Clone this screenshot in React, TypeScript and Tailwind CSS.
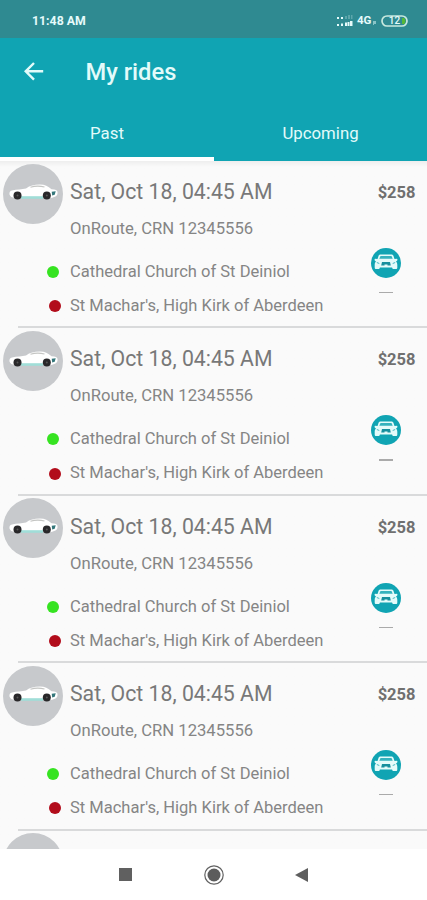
import React from 'react';

type Ride = { date: string; service: string; from: string; to: string; price: string };

const ride: Ride = {
  date: 'Sat, Oct 18, 04:45 AM',
  service: 'OnRoute, CRN 12345556',
  from: 'Cathedral Church of St Deiniol',
  to: "St Machar's, High Kirk of Aberdeen",
  price: '$258',
};

const rides: Ride[] = [ride, ride, ride, ride];

function StatusBar() {
  return (
    <div className="flex h-[38px] shrink-0 items-center justify-between bg-[#2f8a91] pl-8 pr-[19px] pt-[4px] text-[#e6fbfb]">
      <span className="text-[12.3px] font-bold leading-none">11:48 AM</span>
      <div className="flex items-center">
        <svg className="h-3 w-4" viewBox="0 0 16 12" fill="currentColor">
          <path d="M0 2h2v2H0zM4 2h2v2H4zM0 9h2v2H0zM4 8.5h2V11H4zM8 7.500h2V11H8zM10.500 7h2v4h-2zM13 6h2.500v5H13z" />
          <path opacity=".25" d="M8 1h2v3H8zM11 0h2v4h-2zM14 0h1.500v4H14z" />
        </svg>
        <span className="ml-1 w-[15px] text-[11.5px] font-bold leading-none">4G</span>
        <svg className="ml-px mr-1 mt-1 h-1 w-1" viewBox="0 0 4 4"><path fill="#8ac4c7" d="M0 0h3v3H1v1H0z" /></svg>
        <div className="relative -mt-px flex h-3 w-[27px] items-center justify-center">
          <svg className="absolute inset-0" width="27" height="12" viewBox="0 0 27 12">
            <path d="M21 3h2.500l1 3-1 3H21z" fill="#55b936" />
            <rect x="1" y="1" width="25" height="10" rx="5" fill="none" stroke="#c8e9df" strokeWidth="1.700" />
          </svg>
          <span className="relative pt-px text-[10px] font-medium leading-none">12</span>
        </div>
      </div>
    </div>
  );
}

function SideCar() {
  return (
    <svg className="h-[60px] w-[60px] shrink-0" viewBox="0 0 60 60">
      <circle cx="30" cy="30" r="30" fill="#c7c9cc" />
      <path d="M6.500 30.500c-.3-2.500.5-3.500 2.500-4 5-1.300 10-1 14-2 4-3 8-4 14-4 5 0 8 2 11.500 4.700 4 .4 6 1 6 2.800.3 2-.5 3.500-2 4.500l-4 1.500H12c-3-.3-5-1.500-5.500-3.500z" fill="#fff" />
      <path d="M18 32.200h22v2.600H18z" fill="#a0ded8" />
      <path d="M27.500 23.300c4-1.300 9-1.500 14-.3" fill="none" stroke="#c4c5c3" strokeWidth="1.200" />
      <circle cx="14.500" cy="31.500" r="4" fill="#29282a" />
      <circle cx="43.800" cy="31.500" r="4" fill="#29282a" />
      <circle cx="14.500" cy="31.500" r="1" fill="#555" />
      <circle cx="43.800" cy="31.500" r="1" fill="#555" />
      <path d="M48.700 27.700l4-.5-1 3.500-2.500.7z" fill="#34777b" />
    </svg>
  );
}

function FrontCar() {
  return (
    <svg className="h-[30px] w-[30px]" viewBox="0 0 30 30">
      <circle cx="15" cy="15" r="15" fill="#10a4b3" />
      <path d="M9.500 6.500h11c1 0 1.600.5 2 1.500l1 3 2.500-.3c.6.7.6 1.300 0 2l-1 .8c1 1 1.300 2 1.300 3.500v2.500c0 1-.5 1.500-1.500 1.500h-2c-1 0-1.500-.5-1.700-1.500H8.900c-.2 1-.7 1.500-1.700 1.500h-2c-1 0-1.500-.5-1.500-1.500V17c0-1.500.3-2.500 1.300-3.500l-1-.8c-.6-.7-.6-1.300 0-2l2.500.3 1-3c.4-1 1-1.500 2-1.500z" fill="#e4fbfa" />
      <path d="M9.500 8h11l1.200 2.800H8.300z" fill="#35b2bd" />
      <path d="M11 14h8l.8 3.500h-3.300v-1h-3v1h-3.300z" fill="#168f9d" />
      <path d="M5.800 14.500l2.500 1M24.200 14.500l-2.500 1" stroke="#48b8c2" />
    </svg>
  );
}

function RideRow({ item }: { item: Ride }) {
  return (
    <article className="flex h-[167.4px] shrink-0 flex-col">
      <div className="flex flex-1 pl-[2.5px] pr-[11.5px] pt-[2.5px] text-[#858585]">
        <div className="w-[67.5px] shrink-0">
          <SideCar />
          <div className="mt-[42.3px] flex flex-col">
            <i className="ml-[44.5px] block h-3 w-3 rounded-full bg-[#36e321]" />
            <i className="ml-[46.5px] mt-[22.5px] block h-3 w-3 rounded-full bg-[#b20c1b]" />
          </div>
        </div>
        <div className="flex flex-1 flex-col whitespace-nowrap">
          <h2 className="mt-[14.5px] text-[21.25px] leading-7 text-[#787878]">{item.date}</h2>
          <p className="mt-[12.8px] text-[16.65px] leading-5">{item.service}</p>
          <p className="mt-[23px] text-[16.55px] leading-5">{item.from}</p>
          <p className="mt-[14.2px] text-[16.52px] leading-5">{item.to}</p>
        </div>
        <div className="flex w-11 flex-col items-end">
          <span className="mt-[19.3px] text-[16.5px] font-bold leading-5 text-[#707070]">{item.price}</span>
          <div className="mr-[14.5px] mt-[45px] flex flex-col items-center">
            <FrontCar />
            <i className="mt-[14px] block h-[1.5px] w-[14px] bg-[#aaa]" />
          </div>
        </div>
      </div>
      <div className="ml-[18px] h-[2px] shrink-0 bg-[#d9dadb]" />
    </article>
  );
}

export default function App() {
  return (
    <main className="flex h-[900px] w-[427px] flex-col overflow-hidden bg-[#fafafa] font-['Roboto',sans-serif]">
      <StatusBar />
      <header className="flex h-[123px] shrink-0 flex-col bg-[#10a4b3] text-[#e3fbfa]">
        <div className="flex h-[67px] items-center pl-6">
          <svg className="h-5 w-5" viewBox="0 0 20 20" fill="none" stroke="currentColor" strokeWidth="2.4">
            <path d="M10 1L1.700 9.300l8.300 8.300M1.700 9.300h17.500" />
          </svg>
          <h1 className="ml-[41.5px] mt-px text-[23.7px] font-medium leading-7">My rides</h1>
        </div>
        <nav className="flex flex-1 text-[16.8px]">
          <div className="flex w-[214px] flex-col border-b-4 border-white pt-[16px] text-center leading-6">Past</div>
          <div className="flex-1 pt-[16px] text-center leading-6">Upcoming</div>
        </nav>
      </header>
      <section className="flex h-[688px] shrink-0 flex-col overflow-hidden bg-gradient-to-b from-[#eeeeee] to-[#fafafa] to-[6px]">
        {rides.map((item, n) => <RideRow key={n} item={item} />)}
        <div className="pl-[2.5px] pt-[2.5px]"><SideCar /></div>
      </section>
      <footer className="flex flex-1 items-center bg-white">
        <svg className="ml-[119px] h-[13px] w-[13px]" viewBox="0 0 13 13"><path fill="#606060" d="M0 0h13v13H0z" /></svg>
        <svg className="ml-[72px] h-5 w-5" viewBox="0 0 20 20">
          <circle cx="10" cy="10" r="9.200" fill="none" stroke="#626262" strokeWidth="1.200" />
          <circle cx="10" cy="10" r="6.500" fill="#5c5c5c" />
        </svg>
        <svg className="ml-[71px] h-[14px] w-[13px]" viewBox="0 0 13 14"><path fill="#5e5e5e" d="M13 0v14L0 7z" /></svg>
      </footer>
    </main>
  );
}
